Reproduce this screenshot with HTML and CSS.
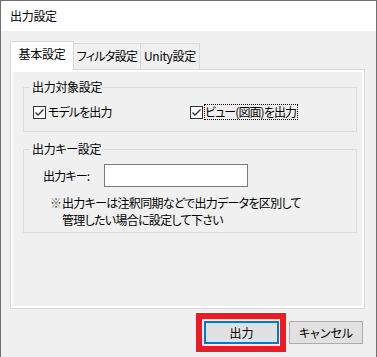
FILE: index.html
```html
<!DOCTYPE html>
<html>
<head>
    <meta charset="UTF-8">
    <title>出力設定</title>
    <link rel="stylesheet" href="styles.css">
</head>
<body>
    <div class="window">
        <div class="title-bar">出力設定</div>
        <div class="window-body">
            <div class="tab-strip">
                <div class="tab tab-active tab-basic">基本設定</div>
                <div class="tab tab-filter">フィルタ設定</div>
                <div class="tab tab-unity">Unity設定</div>
            </div>
            <div class="tab-page">
                <div class="tab-page-inner">
                    <fieldset class="group group-target">
                        <legend class="group-label">出力対象設定</legend>
                        <div class="check-row">
                            <label class="check-option check-model">
                                <span class="check-box">
                                    <svg width="11" height="11" viewBox="0 0 11 11">
                                        <path d="M1.5 5.5 L4 8 L9.5 2.5" fill="none" stroke="#333" stroke-width="1.4"/>
                                    </svg>
                                </span>
                                <span class="check-text">モデルを出力</span>
                            </label>
                            <label class="check-option">
                                <span class="check-box">
                                    <svg width="11" height="11" viewBox="0 0 11 11">
                                        <path d="M1.5 5.5 L4 8 L9.5 2.5" fill="none" stroke="#333" stroke-width="1.4"/>
                                    </svg>
                                </span>
                                <span class="check-text check-focused">ビュー(図面)を出力</span>
                            </label>
                        </div>
                    </fieldset>
                    <fieldset class="group group-key">
                        <legend class="group-label">出力キー設定</legend>
                        <div class="key-row">
                            <span class="key-label">出力キー:</span>
                            <input type="text" class="key-input">
                        </div>
                        <div class="key-note">
                            <span class="note-mark">※</span>
                            <span class="note-text">出力キーは注釈同期などで出力データを区別して<br>管理したい場合に設定して下さい</span>
                        </div>
                    </fieldset>
                </div>
            </div>
            <div class="button-group">
                <div class="highlight">
                    <button class="button ok-button">出力</button>
                </div>
                <button class="button cancel-button">キャンセル</button>
            </div>
        </div>
    </div>
</body>
</html>
```

FILE: styles.css
```css
body {
    margin: 0;
    font-family: "Noto Sans CJK JP", "Noto Sans", sans-serif;
    font-size: 12px;
    font-feature-settings: "palt";
    letter-spacing: -0.3px;
    color: #000;
    background-color: #f0f0f0;
}

.window {
    width: 377px;
    height: 357px;
    box-sizing: border-box;
    border: 1px solid #6f6f6f;
    border-bottom: none;
    background-color: #f0f0f0;
}

.title-bar {
    height: 30px;
    line-height: 29px;
    padding-left: 9px;
    background-color: white;
}

.window-body {
    padding: 10px 0 0 9px;
}

.tab-strip {
    display: flex;
    align-items: flex-end;
    height: 28px;
}

.tab {
    box-sizing: border-box;
    height: 26px;
    padding-top: 4px;
    line-height: 16px;
    text-align: center;
    border: 1px solid #d9d9d9;
    border-bottom: none;
    background-color: #f0f0f0;
    margin-left: -1px;
}

.tab-active {
    position: relative;
    z-index: 1;
    height: 29px;
    padding-top: 4px;
    margin-bottom: -1px;
    margin-left: 0;
    background-color: white;
}

.tab-basic {
    width: 64px;
}

.tab-filter {
    width: 68px;
    letter-spacing: -0.7px;
}

.tab-unity {
    width: 60px;
}

.tab-page {
    width: 355px;
    height: 240px;
    box-sizing: border-box;
    border: 1px solid #d9d9d9;
    padding: 2px;
    background-color: white;
}

.tab-page-inner {
    height: 100%;
    background-color: #f0f0f0;
    padding-top: 7px;
    box-sizing: border-box;
}

.group {
    width: 334px;
    box-sizing: border-box;
    margin: 0 0 0 10px;
    padding: 0;
    border: 1px solid #dcdcdc;
    min-width: 0;
}

.group-label {
    margin-left: 6px;
    padding: 0 1px 0 2px;
    line-height: 16px;
}

.group-key {
    margin-top: 9px;
}

.check-row {
    display: flex;
    align-items: center;
    padding: 9px 0 11px 9px;
}

.check-option {
    display: flex;
    align-items: center;
    gap: 1px;
    line-height: 14px;
}

.check-model {
    width: 157px;
}

.check-box {
    width: 13px;
    height: 13px;
    flex-shrink: 0;
    box-sizing: border-box;
    border: 1px solid #333;
    background-color: white;
    display: flex;
    align-items: center;
    justify-content: center;
}

.check-text {
    border: 1px dotted transparent;
    padding: 0 1px 0 0;
    letter-spacing: -0.9px;
}

.check-focused {
    border-color: #000;
}

.key-row {
    display: flex;
    align-items: center;
    padding: 7px 0 0 19px;
}

.key-label {
    width: 61px;
    letter-spacing: -0.8px;
}

.key-input {
    width: 144px;
    height: 23px;
    box-sizing: border-box;
    margin: 0;
    border: 1px solid #7a7a7a;
    background-color: white;
    outline: none;
}

.key-note {
    display: flex;
    padding: 7px 0 4px 26px;
    line-height: 17px;
}

.note-mark {
    width: 12px;
    flex-shrink: 0;
    color: #555;
}

.note-text {
    letter-spacing: -0.7px;
}

.button-group {
    display: flex;
    align-items: center;
    margin-top: 4px;
    padding-left: 186px;
}

.highlight {
    border: 6px solid #ec1c24;
    padding: 2px 1px 2px 2px;
    margin-right: 3px;
}

.button {
    height: 23px;
    box-sizing: border-box;
    margin: 0;
    padding: 0;
    font-family: inherit;
    font-size: 12px;
    font-feature-settings: "palt";
    color: #000;
    background-color: #e1e1e1;
    display: block;
}

.ok-button {
    width: 75px;
    border: 2px solid #0078d7;
}

.cancel-button {
    width: 74px;
    border: 1px solid #adadad;
}
```
